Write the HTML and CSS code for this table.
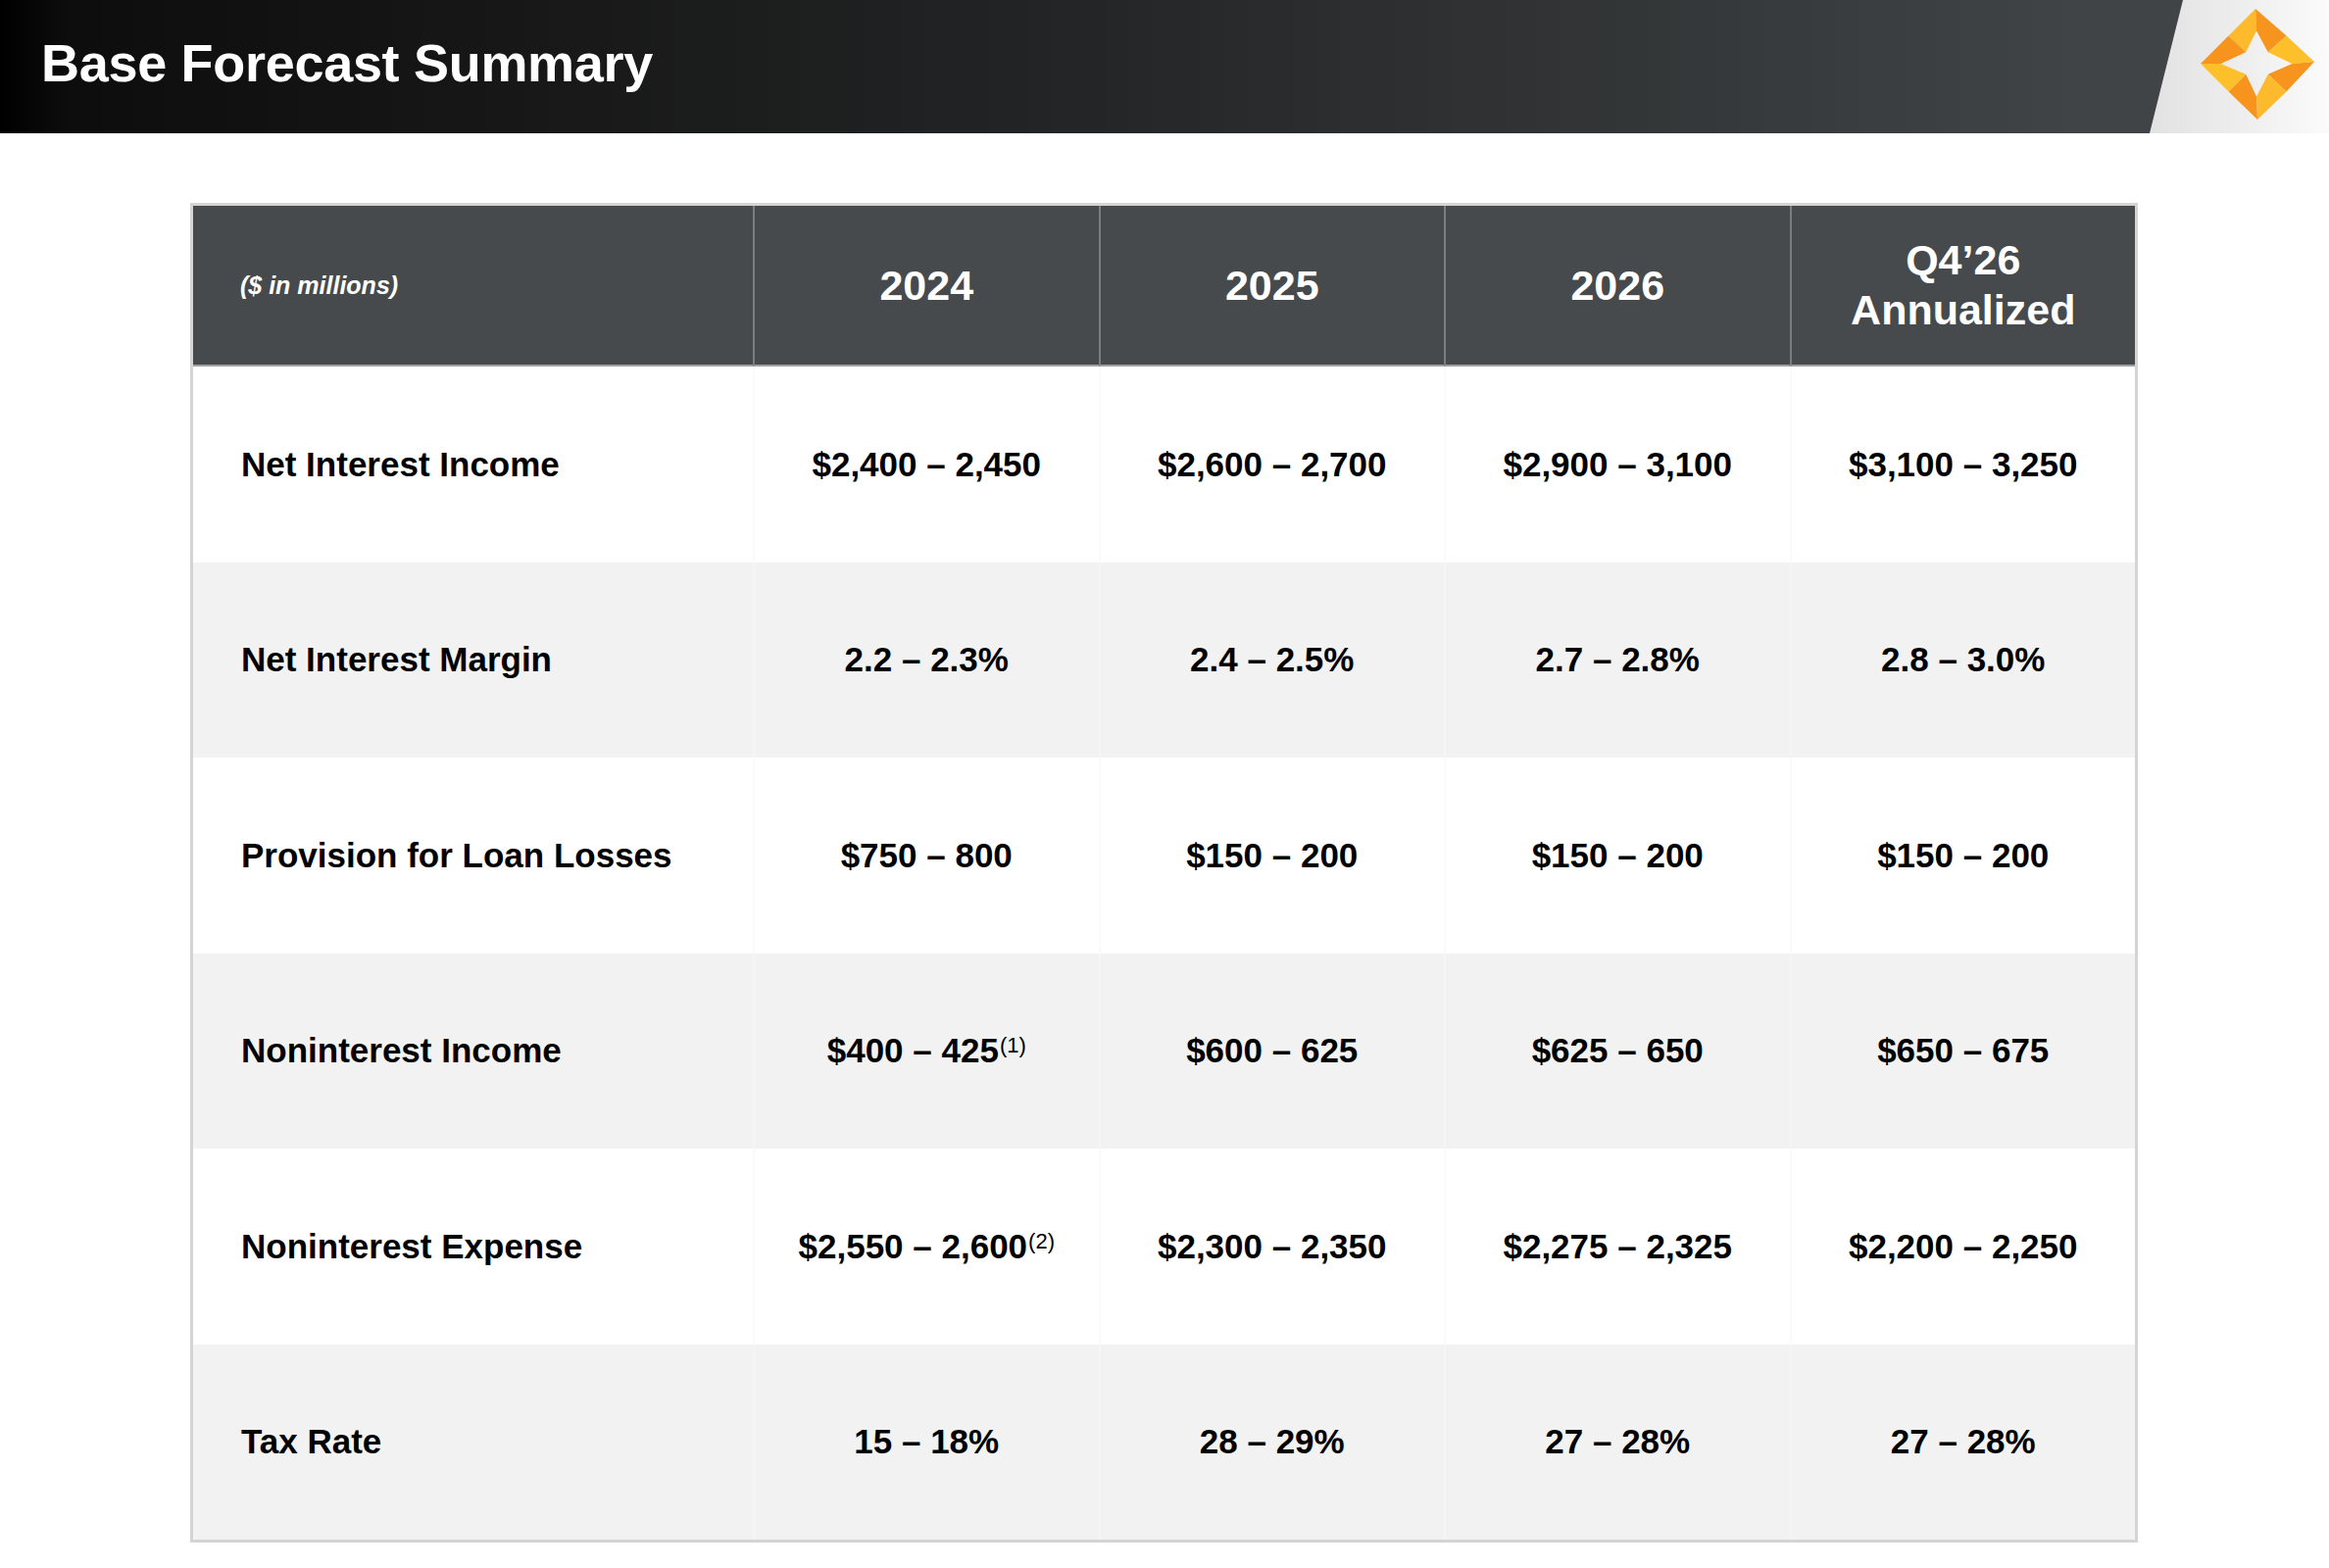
FILE: index.html
```html
<!DOCTYPE html>
<html lang="en">
<head>
<meta charset="utf-8">
<title>Base Forecast Summary</title>
<link rel="stylesheet" href="styles.css">
</head>
<body>
<header class="banner">
  <h1 class="banner-title">Base Forecast Summary</h1>
  <div class="brand">
    <svg class="brand-logo" viewBox="0 0 120 116" width="118" height="116" aria-hidden="true">
      <polygon points="30,29 58,1 59,24 48,46" fill="#fdba2c"/>
      <polygon points="58,1 90,29 71,46 59,24" fill="#f7941d"/>
      <polygon points="90,29 119,56 96,58 71,46" fill="#fdc02a"/>
      <polygon points="119,56 90,87 71,69 96,58" fill="#f7941d"/>
      <polygon points="90,87 60,116 59,92 71,69" fill="#fdba2c"/>
      <polygon points="60,116 30,87 48,69 59,92" fill="#f7941d"/>
      <polygon points="30,87 1,58 22,58 48,69" fill="#fdc02a"/>
      <polygon points="1,58 30,29 48,46 22,58" fill="#f7941d"/>
    </svg>
  </div>
</header>

<main class="content">
  <div class="forecast" role="table">
    <div class="cell head label-head" role="columnheader"><span class="units">($ in millions)</span></div>
    <div class="cell head" role="columnheader"><span>2024</span></div>
    <div class="cell head" role="columnheader"><span>2025</span></div>
    <div class="cell head" role="columnheader"><span>2026</span></div>
    <div class="cell head" role="columnheader"><span>Q4’26<br>Annualized</span></div>

    <div class="cell label" role="rowheader"><span>Net Interest Income</span></div>
    <div class="cell" role="cell"><span>$2,400 – 2,450</span></div>
    <div class="cell" role="cell"><span>$2,600 – 2,700</span></div>
    <div class="cell" role="cell"><span>$2,900 – 3,100</span></div>
    <div class="cell" role="cell"><span>$3,100 – 3,250</span></div>

    <div class="cell label alt" role="rowheader"><span>Net Interest Margin</span></div>
    <div class="cell alt" role="cell"><span>2.2 – 2.3%</span></div>
    <div class="cell alt" role="cell"><span>2.4 – 2.5%</span></div>
    <div class="cell alt" role="cell"><span>2.7 – 2.8%</span></div>
    <div class="cell alt" role="cell"><span>2.8 – 3.0%</span></div>

    <div class="cell label" role="rowheader"><span>Provision for Loan Losses</span></div>
    <div class="cell" role="cell"><span>$750 – 800</span></div>
    <div class="cell" role="cell"><span>$150 – 200</span></div>
    <div class="cell" role="cell"><span>$150 – 200</span></div>
    <div class="cell" role="cell"><span>$150 – 200</span></div>

    <div class="cell label alt" role="rowheader"><span>Noninterest Income</span></div>
    <div class="cell alt" role="cell"><span>$400 – 425<sup class="note">(1)</sup></span></div>
    <div class="cell alt" role="cell"><span>$600 – 625</span></div>
    <div class="cell alt" role="cell"><span>$625 – 650</span></div>
    <div class="cell alt" role="cell"><span>$650 – 675</span></div>

    <div class="cell label" role="rowheader"><span>Noninterest Expense</span></div>
    <div class="cell" role="cell"><span>$2,550 – 2,600<sup class="note">(2)</sup></span></div>
    <div class="cell" role="cell"><span>$2,300 – 2,350</span></div>
    <div class="cell" role="cell"><span>$2,275 – 2,325</span></div>
    <div class="cell" role="cell"><span>$2,200 – 2,250</span></div>

    <div class="cell label alt" role="rowheader"><span>Tax Rate</span></div>
    <div class="cell alt" role="cell"><span>15 – 18%</span></div>
    <div class="cell alt" role="cell"><span>28 – 29%</span></div>
    <div class="cell alt" role="cell"><span>27 – 28%</span></div>
    <div class="cell alt" role="cell"><span>27 – 28%</span></div>
  </div>
</main>
</body>
</html>
```

FILE: styles.css
```css
html, body {
  margin: 0;
  padding: 0;
  background: #ffffff;
}

body {
  font-family: "Liberation Sans", Arial, "Helvetica Neue", sans-serif;
  color: #000000;
}

/* ---------- Banner ---------- */
.banner {
  display: flex;
  height: 136px;
  background: linear-gradient(90deg,
    #000000 0%,
    #0d0d0d 3%,
    #151515 18%,
    #232425 45%,
    #333637 70%,
    #3f4345 88%,
    #424648 100%);
}

.banner-title {
  margin: 0;
  padding: 37px 0 0 42px;
  font-size: 54px;
  line-height: 1;
  font-weight: 700;
  color: #ffffff;
  letter-spacing: -0.3px;
}

.brand {
  margin-left: auto;
  width: 183px;
  height: 136px;
  box-sizing: border-box;
  padding: 0 0 7px 37px;
  display: flex;
  align-items: center;
  justify-content: center;
  background: linear-gradient(90deg, #e2e2e2 0%, #ececec 45%, #fbfbfb 100%);
  clip-path: polygon(34px 0, 100% 0, 100% 100%, 0 100%);
}

.brand-logo {
  display: block;
}

/* ---------- Table ---------- */
.content {
  padding: 71px 0 0 194px;
}

.forecast {
  width: 1987px;
  box-sizing: border-box;
  border: 3px solid #d4d4d4;
  display: grid;
  grid-template-columns: 571px repeat(4, 1fr);
  grid-template-rows: 164px repeat(6, 199.5px);
}

.cell {
  display: flex;
  align-items: center;
  justify-content: center;
  text-align: center;
  font-size: 35px;
  font-weight: 700;
  line-height: 1.15;
  background: #ffffff;
  border-left: 2px solid #fafafa;
}

.cell.alt {
  background: #f2f2f2;
  border-left-color: #f5f5f5;
}

.cell.label {
  justify-content: flex-start;
  text-align: left;
  padding-left: 49px;
  border-left: 0;
}

.cell.head {
  background: #464a4c;
  color: #ffffff;
  font-size: 43px;
  line-height: 51px;
  border-left: 2px solid #7a7e80;
  border-bottom: 2px solid #a0a0a0;
}

.cell.head.label-head {
  justify-content: flex-start;
  padding-left: 48px;
  border-left: 0;
}

.units {
  font-size: 25px;
  font-style: italic;
  font-weight: 700;
  line-height: 1;
}

.note {
  font-size: 22px;
  font-weight: 400;
  vertical-align: 10px;
  line-height: 0;
  margin-left: 1px;
}
```
